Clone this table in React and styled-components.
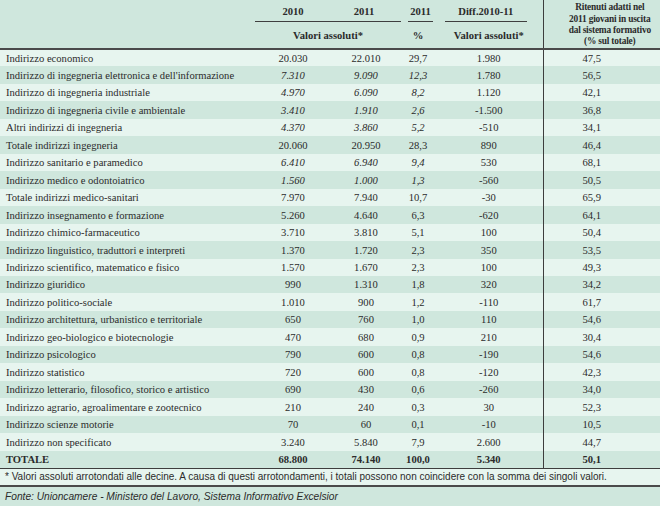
import styled, { createGlobalStyle } from "styled-components";

const Global = createGlobalStyle`
  html, body {
    margin: 0;
    padding: 0;
    background: #ffffff;
  }
`

const Wrap = styled.div`
  width: 660px;
  height: 506px;
  overflow: hidden;
  color: #2b2b2b;
`

const Table = styled.table`
  width: 660px;
  border-collapse: collapse;
  table-layout: fixed;
  font-family: "Liberation Serif", "Times New Roman", serif;
  font-size: 10.6px;
`

const HeadRow = styled.tr`
  background: #cfe7dd;
`

const Th = styled.th`
  font-weight: bold;
  text-align: center;
  padding: 0;
  height: ${(p) => p.h || 24}px;
  vertical-align: middle;
  border-right: ${(p) => (p.divider ? "1.5px solid #3d3d3d" : "none")};
  border-bottom: ${(p) => (p.bottom ? "2px solid #4a4a4a" : "none")};
  white-space: nowrap;
  overflow: hidden;
`

const YearLabel = styled.div`
  margin: 0 ${(p) => p.mr || 0}px 0 ${(p) => p.ml || 0}px;
  padding-top: 2px;
  height: 19px;
  line-height: 19px;
  border-bottom: 1px solid #3f3f3f;
  display: flex;
`

const YearCell = styled.span`
  width: ${(p) => p.w}px;
  text-align: center;
`

const LastHead = styled.th`
  font-weight: bold;
  text-align: center;
  font-size: 9.4px;
  letter-spacing: -0.2px;
  line-height: 11.4px;
  padding: 2px 0 0 16px;
  white-space: nowrap;
  border-bottom: 2px solid #4a4a4a;
`

const Row = styled.tr`
  background: ${(p) => (p.dark ? "#cfe7dd" : "#e7f5ef")};
  height: ${(p) => p.h}px;
`

const Label = styled.td`
  padding: 0 0 0 6px;
  white-space: nowrap;
  font-weight: ${(p) => (p.bold ? "bold" : "normal")};
`

const Num = styled.td`
  padding: 0;
  text-align: center;
  font-style: ${(p) => (p.it ? "italic" : "normal")};
  font-weight: ${(p) => (p.bold ? "bold" : "normal")};
  border-right: ${(p) => (p.divider ? "1.5px solid #3d3d3d" : "none")};
`

const LastNum = styled(Num)`
  padding-right: 20px;
`

const NoteRow = styled.div`
  background: ${(p) => (p.dark ? "#cfe7dd" : "#e7f5ef")};
  height: ${(p) => p.h}px;
  line-height: ${(p) => p.h}px;
  padding-left: 5px;
  font-family: "Liberation Sans", Arial, sans-serif;
  font-size: ${(p) => p.size}px;
  font-style: ${(p) => (p.it ? "italic" : "normal")};
  border-top: ${(p) => p.top};
  white-space: nowrap;
`

const rows = [
  ["Indirizzo economico", "20.030", "22.010", "29,7", "1.980", "47,5", false],
  ["Indirizzo di ingegneria elettronica e dell'informazione", "7.310", "9.090", "12,3", "1.780", "56,5", true],
  ["Indirizzo di ingegneria industriale", "4.970", "6.090", "8,2", "1.120", "42,1", true],
  ["Indirizzo di ingegneria civile e ambientale", "3.410", "1.910", "2,6", "-1.500", "36,8", true],
  ["Altri indirizzi di ingegneria", "4.370", "3.860", "5,2", "-510", "34,1", true],
  ["Totale indirizzi ingegneria", "20.060", "20.950", "28,3", "890", "46,4", false],
  ["Indirizzo sanitario e paramedico", "6.410", "6.940", "9,4", "530", "68,1", true],
  ["Indirizzo medico e odontoiatrico", "1.560", "1.000", "1,3", "-560", "50,5", true],
  ["Totale indirizzi medico-sanitari", "7.970", "7.940", "10,7", "-30", "65,9", false],
  ["Indirizzo insegnamento e formazione", "5.260", "4.640", "6,3", "-620", "64,1", false],
  ["Indirizzo chimico-farmaceutico", "3.710", "3.810", "5,1", "100", "50,4", false],
  ["Indirizzo linguistico, traduttori e interpreti", "1.370", "1.720", "2,3", "350", "53,5", false],
  ["Indirizzo scientifico, matematico e fisico", "1.570", "1.670", "2,3", "100", "49,3", false],
  ["Indirizzo giuridico", "990", "1.310", "1,8", "320", "34,2", false],
  ["Indirizzo politico-sociale", "1.010", "900", "1,2", "-110", "61,7", false],
  ["Indirizzo architettura, urbanistico e territoriale", "650", "760", "1,0", "110", "54,6", false],
  ["Indirizzo geo-biologico e biotecnologie", "470", "680", "0,9", "210", "30,4", false],
  ["Indirizzo psicologico", "790", "600", "0,8", "-190", "54,6", false],
  ["Indirizzo statistico", "720", "600", "0,8", "-120", "42,3", false],
  ["Indirizzo letterario, filosofico, storico e artistico", "690", "430", "0,6", "-260", "34,0", false],
  ["Indirizzo agrario, agroalimentare e zootecnico", "210", "240", "0,3", "30", "52,3", false],
  ["Indirizzo scienze motorie", "70", "60", "0,1", "-10", "10,5", false],
  ["Indirizzo non specificato", "3.240", "5.840", "7,9", "2.600", "44,7", false],
]

// rows share 419px between them
const rowH = (i) => Math.round((i + 1) * 17.46) - Math.round(i * 17.46)

export default function App() {
  return (
    <Wrap>
      <Global />
      <Table>
        <colgroup>
          <col style={{ width: 255 }} />
          <col style={{ width: 76 }} />
          <col style={{ width: 70 }} />
          <col style={{ width: 34 }} />
          <col style={{ width: 108 }} />
          <col style={{ width: 117 }} />
        </colgroup>
        <thead>
          <HeadRow>
            <Th rowSpan={2} bottom h={48}></Th>
            <Th colSpan={2} h={22}>
              <YearLabel>
                <YearCell w={76}>2010</YearCell>
                <YearCell w={66}>2011</YearCell>
              </YearLabel>
            </Th>
            <Th h={22}>
              <YearLabel ml={7} mr={2}>
                <YearCell w={25}>2011</YearCell>
              </YearLabel>
            </Th>
            <Th h={22} divider>
              <YearLabel ml={10} mr={16}>
                <YearCell w={82}>Diff.2010-11</YearCell>
              </YearLabel>
            </Th>
            <LastHead rowSpan={2}>
              Ritenuti adatti nel
              <br />
              2011 giovani in uscita
              <br />
              dal sistema formativo
              <br />
              (% sul totale)
            </LastHead>
          </HeadRow>
          <HeadRow>
            <Th colSpan={2} bottom h={26}>Valori assoluti*</Th>
            <Th bottom h={26}>%</Th>
            <Th bottom divider h={26}>Valori assoluti*</Th>
          </HeadRow>
        </thead>
        <tbody>
          {rows.map((r, i) => (
            <Row key={r[0]} dark={i % 2 === 1} h={rowH(i)}>
              <Label>{r[0]}</Label>
              <Num it={r[6]}>{r[1]}</Num>
              <Num it={r[6]}>{r[2]}</Num>
              <Num it={r[6]}>{r[3]}</Num>
              <Num divider>{r[4]}</Num>
              <LastNum>{r[5]}</LastNum>
            </Row>
          ))}
          <Row dark h={rowH(23)}>
            <Label bold>TOTALE</Label>
            <Num bold>68.800</Num>
            <Num bold>74.140</Num>
            <Num bold>100,0</Num>
            <Num bold divider>5.340</Num>
            <LastNum bold>50,1</LastNum>
          </Row>
        </tbody>
      </Table>
      <NoteRow h={16} size={10} top="1.5px solid #3d3d3d">
        * Valori assoluti arrotondati alle decine. A causa di questi arrotondamenti, i totali possono non coincidere con la somma dei singoli valori.
      </NoteRow>
      <NoteRow dark it h={19} size={10.2} top="2px solid #4a4a4a">
        Fonte: Unioncamere - Ministero del Lavoro, Sistema Informativo Excelsior
      </NoteRow>
    </Wrap>
  )
}
